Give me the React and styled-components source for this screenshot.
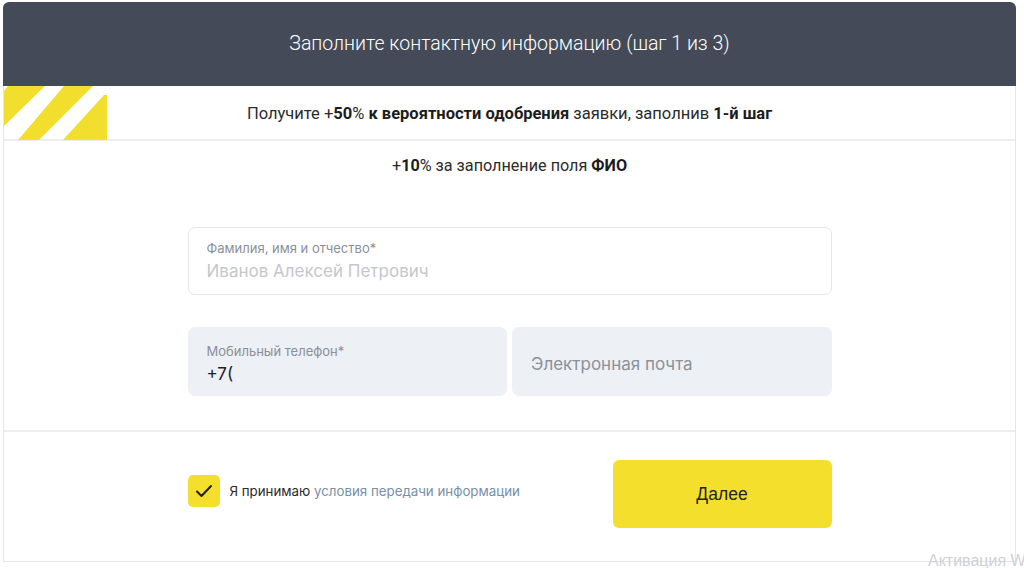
import React from "react";
import styled, { createGlobalStyle } from "styled-components";

const Global = createGlobalStyle`
  html, body { margin: 0; padding: 0; background: #ffffff; }
  body { font-family: Roboto, "Noto Sans", sans-serif; }
  * { box-sizing: border-box; }
`;

const Page = styled.div`
  position: relative;
  width: 1024px;
  height: 568px;
  padding: 2px 8px 6px 3px;
  overflow: hidden;
`;

const Card = styled.div`
  height: 560px;
  border: 1px solid #e4e6e9;
  border-top: none;
  border-radius: 7px 7px 0 0;
  display: flex;
  flex-direction: column;
`;

const Header = styled.div`
  height: 84px;
  background: #444a57;
  border-radius: 6px 6px 0 0;
  margin: 0 -1px;
  display: flex;
  align-items: center;
  justify-content: center;
  color: #ffffff;
  font-family: Roboto, sans-serif;
  font-weight: 300;
  font-size: 19.5px;
  padding-bottom: 2px;
`;

const Promo = styled.div`
  position: relative;
  height: 55px;
  border-bottom: 2px solid #eceef1;
  display: flex;
  align-items: center;
  justify-content: center;
  font-size: 16.5px;
  color: #2b2b2b;
  padding-top: 1px;
`;

const Stripes = styled.svg`
  position: absolute;
  left: 0;
  top: 0;
`;

const Bold = styled.b`
  font-weight: 700;
  color: #1c1c1c;
`;

const Body = styled.div`
  height: 291px;
  border-bottom: 2px solid #eceef1;
  display: flex;
  flex-direction: column;
  align-items: center;
  padding-top: 15px;
`;

const Bonus = styled.div`
  font-size: 16.2px;
  color: #2b2b2b;
  line-height: 20px;
  margin-bottom: 51px;
`;

const Form = styled.div`
  width: 644px;
  display: flex;
  flex-direction: column;
  gap: 32px;
`;

const Row = styled.div`
  display: flex;
  gap: 5px;
  & > * {
    flex: 1 1 0;
  }
`;

const Field = styled.div`
  height: ${(p) => (p.$filled ? "69px" : "68px")};
  border-radius: 7px;
  border: 1px solid ${(p) => (p.$filled ? "#edf0f5" : "#e3e6ea")};
  background: ${(p) => (p.$filled ? "#edf0f5" : "#ffffff")};
  padding: ${(p) => (p.$filled ? "5px 18px 0" : "0 18px")};
  display: flex;
  flex-direction: column;
  justify-content: center;
  font-family: Inter, "Noto Sans", sans-serif;
`;

const Label = styled.div`
  font-size: 13px;
  color: #8a8f98;
  line-height: 16px;
  margin-bottom: 5px;
  margin-top: -2px;
`;

const Value = styled.div`
  font-size: 17px;
  line-height: 20px;
  color: ${(p) => p.$color};
`;

const Footer = styled.div`
  flex: 1;
  display: flex;
  justify-content: center;
  padding-top: 28px;
`;

const FooterInner = styled.div`
  width: 644px;
  height: 68px;
  display: flex;
  align-items: center;
  justify-content: space-between;
`;

const Consent = styled.label`
  display: flex;
  align-items: center;
  gap: 10px;
  margin-bottom: 6px;
  font-family: Inter, "Noto Sans", sans-serif;
  font-size: 13.3px;
  color: #2b2b2b;
`;

const Check = styled.span`
  width: 32px;
  height: 32px;
  border-radius: 5px;
  background: #f4e02c;
  display: flex;
  align-items: center;
  justify-content: center;
`;

const Link = styled.a`
  color: #7890a8;
  text-decoration: none;
`;

const Button = styled.button`
  width: 219px;
  height: 68px;
  border: none;
  border-radius: 6px;
  background: #f4e02c;
  font-family: "Liberation Sans", Arial, sans-serif;
  font-size: 17.5px;
  color: #222;
  cursor: pointer;
`;

const Watermark = styled.div`
  position: absolute;
  left: 928px;
  top: 552px;
  font-family: "Liberation Sans", Arial, sans-serif;
  font-size: 16px;
  color: #cfd1d4;
  white-space: nowrap;
`;

export default function App() {
  return (
    <>
      <Global />
      <Page>
        <Card>
          <Header>Заполните контактную информацию (шаг 1 из 3)</Header>
          <Promo>
            <Stripes width="103" height="54" viewBox="0 0 103 54">
              <polygon points="4,0 41,0 0,40 0,5" fill="#f2de2c" />
              <polygon points="60,0 89,0 35,54 14,54" fill="#f2de2c" />
              <polygon points="59,54 100,9 103,9 103,54" fill="#f2de2c" />
            </Stripes>
            <span>
              Получите +<Bold>50</Bold>% <Bold>к вероятности одобрения</Bold> заявки, заполнив{" "}
              <Bold>1-й шаг</Bold>
            </span>
          </Promo>
          <Body>
            <Bonus>
              +<Bold>10</Bold>% за заполнение поля <Bold>ФИО</Bold>
            </Bonus>
            <Form>
              <Field>
                <Label>Фамилия, имя и отчество*</Label>
                <Value $color="#c4c7cc">Иванов Алексей Петрович</Value>
              </Field>
              <Row>
                <Field $filled>
                  <Label>Мобильный телефон*</Label>
                  <Value $color="#1f1f1f">+7(</Value>
                </Field>
                <Field $filled>
                  <Value $color="#8b9099">Электронная почта</Value>
                </Field>
              </Row>
            </Form>
          </Body>
          <Footer>
            <FooterInner>
              <Consent>
                <Check>
                  <svg width="18" height="14" viewBox="0 0 18 14">
                    <path d="M2 7.5 L6.5 12 L16 2" fill="none" stroke="#1e1e1e" strokeWidth="2" strokeLinecap="round" strokeLinejoin="round" />
                  </svg>
                </Check>
                <span>
                  Я принимаю <Link href="#">условия передачи информации</Link>
                </span>
              </Consent>
              <Button>Далее</Button>
            </FooterInner>
          </Footer>
        </Card>
        <Watermark>Активация Windows</Watermark>
      </Page>
    </>
  );
}
